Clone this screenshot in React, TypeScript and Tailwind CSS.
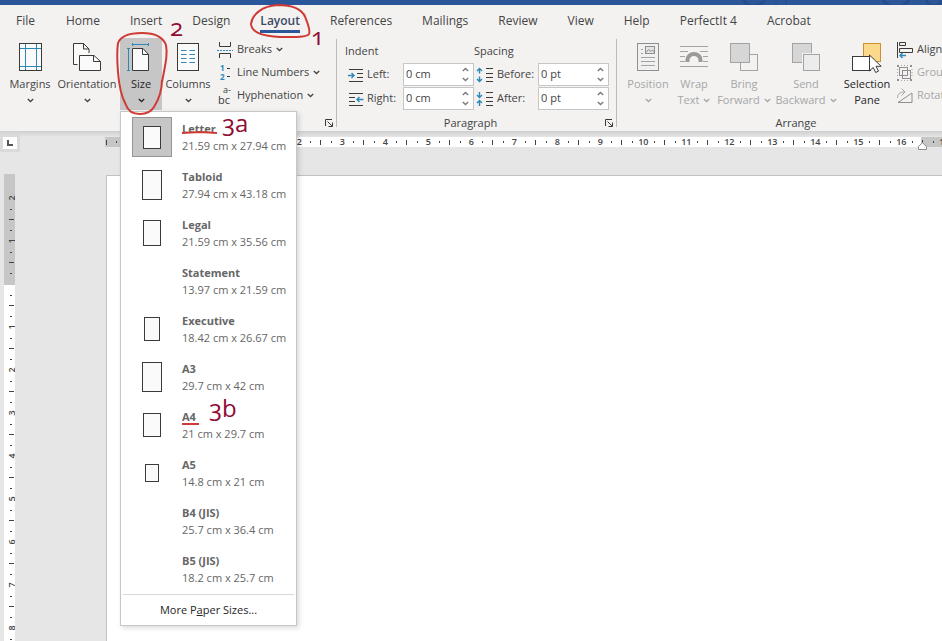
import type { ReactNode } from "react";
import clsx from "clsx";

const TABS = [
  "File",
  "Home",
  "Insert",
  "Design",
  "Layout",
  "References",
  "Mailings",
  "Review",
  "View",
  "Help",
  "PerfectIt 4",
  "Acrobat",
];

type Paper = { name: string; size: string; thumb?: string };

const PAPERS: Paper[] = [
  { name: "Letter", size: "21.59 cm x 27.94 cm", thumb: "w-[18px] h-[23px]" },
  { name: "Tabloid", size: "27.94 cm x 43.18 cm", thumb: "w-5 h-[30px]" },
  { name: "Legal", size: "21.59 cm x 35.56 cm", thumb: "w-[18px] h-[26px]" },
  { name: "Statement", size: "13.97 cm x 21.59 cm" },
  { name: "Executive", size: "18.42 cm x 26.67 cm", thumb: "w-4 h-6" },
  { name: "A3", size: "29.7 cm x 42 cm", thumb: "w-5 h-[30px]" },
  { name: "A4", size: "21 cm x 29.7 cm", thumb: "w-[18px] h-6" },
  { name: "A5", size: "14.8 cm x 21 cm", thumb: "w-[14px] h-[18px]" },
  { name: "B4 (JIS)", size: "25.7 cm x 36.4 cm" },
  { name: "B5 (JIS)", size: "18.2 cm x 25.7 cm" },
];

const INK = "#3b3a39";
const BLUE = "#2b88b8";
const GREY = "#a3a3a3";

function Icon({ w, h, children }: { w: number; h: number; children: ReactNode }) {
  return (
    <svg width={w} height={h} viewBox={`0 0 ${w} ${h}`} fill="none" className="shrink-0 overflow-visible" aria-hidden="true">
      {children}
    </svg>
  );
}

function Chevron() {
  return (
    <svg width="7" height="5" viewBox="0 0 7 5" fill="none" stroke="currentColor" strokeWidth="1.3" aria-hidden="true">
      <path d="M0.8 1l2.7 2.5L6.2 1" />
    </svg>
  );
}

/* ---------- large icons ---------- */

const MarginsIcon = () => (
  <Icon w={24} h={30}>
    <rect x="1.5" y="1.5" width="22" height="27" fill="#fafafa" stroke={INK} />
    <path d="M7.5 2v26M18.5 2v26M2 6.5h21M2 24.5h21" stroke={BLUE} />
  </Icon>
);

const OrientationIcon = () => (
  <Icon w={30} h={30}>
    <path d="M5.5 22.5h-4v-21h10L17 7v4M11.5 1.5V7H17" fill="#fafafa" stroke={INK} />
    <path d="M7.5 13.5H22l6.5 6v9h-21z" fill="#fafafa" stroke={INK} />
    <path d="M21.5 13.5v6h7" stroke={INK} />
  </Icon>
);

const SizeIcon = () => (
  <Icon w={30} h={30}>
    <path d="M6.5 2.5h16M6.5 1v3M22.5 1v3M2.5 6.5v22M1 6.5h3M1 28.5h3" stroke={BLUE} />
    <path d="M6.5 6.5H17l5.5 6v16h-16z" fill="#fafafa" stroke={INK} />
    <path d="M16.5 6.5v6h6" stroke={INK} />
  </Icon>
);

const ColumnsIcon = () => (
  <Icon w={24} h={30}>
    <rect x="1.5" y="1.5" width="21" height="27" fill="#fafafa" stroke={INK} />
    <path
      d="M5 8.5h5.5M5 12.5h5.5M5 16.5h5.5M5 20.5h5.5M13.5 8.5H19M13.5 12.5H19M13.5 16.5H19M13.5 20.5H19"
      stroke={BLUE}
    />
  </Icon>
);

const PositionIcon = () => (
  <Icon w={24} h={30}>
    <rect x="1.5" y="1.5" width="21" height="27" fill="#f0f0f0" stroke="#8f8f8f" />
    <path d="M5 7.5h2M5 11.5h2M5 15.5h14M5 19.5h14M5 23.5h14" stroke={GREY} />
    <rect x="9.5" y="4.5" width="9" height="7" fill="#e4e4e4" stroke="#8f8f8f" />
    <path d="M10 10.5l2.5-3 2.5 2L16.500 8l2 2.500" stroke="#8f8f8f" />
  </Icon>
);

const WrapIcon = () => (
  <Icon w={30} h={30}>
    <path d="M1 4.5h28M1 9.5h8M21 9.5h8M1 14.5h5M24 14.5h5M1 19.5h5M24 19.5h5M1 24.5h28" stroke={GREY} />
    <path d="M8.5 20v-2a6.5 6 0 0 1 13 0v2" stroke="#9a9a9a" strokeWidth="4" />
  </Icon>
);

const ForwardIcon = () => (
  <Icon w={30} h={30}>
    <rect x="11.5" y="12.5" width="17" height="16" fill="#f3f2f1" stroke={GREY} />
    <rect x="1.5" y="1.5" width="19" height="19" fill="#d6d6d6" stroke={GREY} />
  </Icon>
);

const BackwardIcon = () => (
  <Icon w={30} h={30}>
    <rect x="1.5" y="1.5" width="19" height="19" fill="#d6d6d6" stroke={GREY} />
    <rect x="11" y="11" width="19" height="19" fill="#f3f2f1" />
    <rect x="12.5" y="12.5" width="16" height="16" fill="#ececec" stroke={GREY} />
  </Icon>
);

const SelectionIcon = () => (
  <Icon w={32} h={32}>
    <rect x="12.5" y="1.5" width="17" height="18" fill="#fbd88a" stroke="#c9922e" />
    <rect x="1.5" y="14.5" width="18" height="14" fill="#fff" stroke={INK} />
    <path d="M18.5 13v16l3.700-3.500 2.500 5 2.800-1.400-2.500-4.800h5.200z" fill="#fff" stroke={INK} />
  </Icon>
);

/* ---------- small icons ---------- */

const BreaksIcon = () => (
  <Icon w={16} h={16}>
    <path d="M2.5 0v4.5h11V0M2.5 16v-4.500h11V16" stroke={INK} />
    <path d="M0 8.5h16" stroke={BLUE} strokeDasharray="2 1" />
  </Icon>
);

const LineNumbersIcon = () => (
  <Icon w={16} h={16}>
    <text x="3" y="6" fontSize="8" fontWeight="700" fill={BLUE} fontFamily="Open Sans">
      1
    </text>
    <text x="3" y="15" fontSize="8" fontWeight="700" fill={BLUE} fontFamily="Open Sans">
      2
    </text>
    <path d="M10 3.5h3M10 11.5h3" stroke={INK} />
  </Icon>
);

const HyphenationIcon = () => (
  <Icon w={16} h={18}>
    <text x="6" y="6" fontSize="9" fill={INK} fontFamily="Open Sans">
      a-
    </text>
    <text x="1" y="17" fontSize="11" fill={INK} fontFamily="Open Sans">
      bc
    </text>
  </Icon>
);

const IndentLeftIcon = () => (
  <Icon w={16} h={16}>
    <path d="M1 2.5h14M9 6.5h6M9 10.5h6M1 14.5h14" stroke={INK} />
    <path d="M0 8.5h6M3.5 6L6 8.5 3.5 11" stroke={BLUE} strokeWidth="1.4" />
  </Icon>
);

const IndentRightIcon = () => (
  <Icon w={16} h={16}>
    <path d="M1 2.5h14M1 6.5h6M1 10.5h6M1 14.5h14" stroke={INK} />
    <path d="M15.5 8.5H9M11.5 6L9 8.5l2.5 2.5" stroke={BLUE} strokeWidth="1.4" />
  </Icon>
);

const BeforeIcon = () => (
  <Icon w={18} h={16}>
    <path d="M10 1.5h7M10 6.5h7M10 10.5h7M10 14.5h7" stroke={INK} />
    <path d="M3.5 1.5v5M1 4l2.5-2.500L6 4M3.500 9.500v5M1 12l2.500 2.500L6 12" stroke={BLUE} strokeWidth="1.4" />
  </Icon>
);

const AfterIcon = () => (
  <Icon w={18} h={16}>
    <path d="M10 1.5h7M10 6.5h7M10 10.5h7M10 14.5h7" stroke={INK} />
    <path d="M3.5 1v5.5M1 4l2.5 2.500L6 4M3.500 15V9.500M1 12l2.500-2.500L6 12" stroke={BLUE} strokeWidth="1.4" />
  </Icon>
);

const AlignIcon = () => (
  <Icon w={17} h={18}>
    <path d="M1.5 1v16" stroke={INK} />
    <path d="M3.5 1.5h6v3h-6zM3.5 7.5h13v4h-13z" stroke={INK} />
    <path d="M10 14.5H4M6.5 12L4 14.5 6.5 17" stroke={BLUE} strokeWidth="1.4" />
  </Icon>
);

const GroupIcon = () => (
  <Icon w={17} h={18}>
    <rect x="3.5" y="3.5" width="8" height="8" stroke="#8f8f8f" />
    <rect x="6.5" y="6.5" width="8" height="8" stroke="#8f8f8f" />
    <path d="M1 1h2v2H1zM14 1h2v2h-2zM1 15h2v2H1zM14 15h2v2h-2z" fill="#8f8f8f" />
    <path d="M5 1.5h8M5 16.5h8M1.5 5v8M16 5v8" stroke={GREY} strokeDasharray="1 2" />
  </Icon>
);

const RotateIcon = () => (
  <Icon w={17} h={18}>
    <path d="M2 15.5h14V6z" stroke="#8f8f8f" />
    <path d="M1.5 11c0-4 2.5-6 6.5-6M5.500 1.500L9 5 5.500 8.500" stroke={GREY} />
  </Icon>
);

/* ---------- ribbon pieces ---------- */

type BigButtonProps = { icon: ReactNode; label: string; second?: string; arrow?: boolean; className: string };

function BigButton({ icon, label, second, arrow = true, className }: BigButtonProps) {
  return (
    <button type="button" className={clsx("flex h-[72px] shrink-0 flex-col items-center pt-1", className)}>
      <span className="flex h-[34px] justify-center">{icon}</span>
      <span className="whitespace-nowrap leading-4">{label}</span>
      <span className="flex h-4 items-center gap-1 whitespace-nowrap leading-4">
        {second}
        {arrow && <Chevron />}
      </span>
    </button>
  );
}

function SmallButton({ icon, label, arrow, disabled }: { icon: ReactNode; label: string; arrow?: boolean; disabled?: boolean }) {
  return (
    <button
      type="button"
      disabled={disabled}
      className="flex h-[23px] items-center gap-1 whitespace-nowrap disabled:text-[#a6a6a6]"
    >
      {icon}
      <span>{label}</span>
      {arrow && <Chevron />}
    </button>
  );
}

function Spinner({ id, label, value, icon, labelWidth }: { id: string; label: string; value: string; icon: ReactNode; labelWidth: string }) {
  return (
    <div className="flex h-[23px] items-center gap-[3px]">
      {icon}
      <div className="flex items-center">
        <label htmlFor={id} className={clsx("whitespace-nowrap", labelWidth)}>
          {label}
        </label>
        <div className="flex h-[23px] w-[71px] border border-[#c6c6c6] bg-white">
          <input id={id} defaultValue={value} className="w-0 flex-1 bg-transparent pl-[2px] outline-none" />
          <div className="flex w-4 flex-col items-center justify-center gap-[5px] text-[#777]">
            <button type="button" aria-label="Increase" className="rotate-180">
              <Chevron />
            </button>
            <button type="button" aria-label="Decrease">
              <Chevron />
            </button>
          </div>
        </div>
      </div>
    </div>
  );
}

function RibbonGroup({ title, launcher, className, children }: { title: string; launcher?: boolean; className: string; children: ReactNode }) {
  return (
    <section className={clsx("flex shrink-0 flex-col", className)}>
      <div className="flex h-[77px]">{children}</div>
      <div className="flex h-4 items-center">
        <h2 className="flex-1 text-center leading-4">{title}</h2>
        {launcher && (
          <button type="button" aria-label={`${title} settings`} className="mr-[2px]">
            <svg width="10" height="10" viewBox="0 0 10 10" fill="none" stroke={INK} aria-hidden="true">
              <path d="M1.5 8V1.5H8M3.5 3.5l5 5M8.5 4.5v4h-4" />
            </svg>
          </button>
        )}
      </div>
    </section>
  );
}

const Divider = () => <div className="mt-px mb-1 w-px shrink-0 bg-[#bdbbb9]" />;

function PaperMenu() {
  return (
    <div
      role="menu"
      className="absolute top-full left-0 z-10 mt-px w-[177px] border border-[#c6c6c6] bg-white pt-px text-[#666] shadow-[2px_2px_5px_rgba(0,0,0,0.15)]"
    >
      {PAPERS.map((p, i) => (
        <button key={p.name} type="button" role="menuitem" className="flex h-12 w-full items-center gap-[10px] pl-[11px] text-left">
          <span
            className={clsx(
              "flex size-10 shrink-0 items-center justify-center border",
              i === 0 ? "border-[#969696] bg-[#c6c6c6]" : "border-transparent",
            )}
          >
            {p.thumb && <span className={clsx("border border-[#3b3a39] bg-[#fafafa]", p.thumb)} />}
          </span>
          <span className="flex flex-col whitespace-nowrap leading-[17px]">
            <b>{p.name}</b>
            <span>{p.size}</span>
          </span>
        </button>
      ))}
      <div className="mx-[2px] mt-px border-t border-[#d9d9d9]" />
      <button type="button" role="menuitem" className="h-[30px] w-full text-center text-[#262626]">
        More P<u>a</u>per Sizes...
      </button>
    </div>
  );
}

function Ribbon() {
  return (
    <header className="relative z-10 bg-[#f3f2f1] text-[#444]">
      <nav className="flex h-[33px] items-start text-xs">
        {TABS.map((t) => (
          <button
            key={t}
            type="button"
            className={clsx("shrink-0 whitespace-nowrap pt-[6px]", t === "File" ? "px-4" : "px-[15px]")}
          >
            <span
              className={clsx(
                "block leading-[19px]",
                t === "Layout" && "border-b-[3px] border-[#2b579a] font-semibold text-[#3b4a63]",
              )}
            >
              {t}
            </span>
          </button>
        ))}
      </nav>

      <div className="flex h-[93px]">
        <RibbonGroup title="Page Setup" launcher className="w-[336px]">
          <div className="flex pl-1">
            <BigButton icon={<MarginsIcon />} label="Margins" className="w-[52px]" />
            <BigButton icon={<OrientationIcon />} label="Orientation" className="w-[62px]" />
            <div className="relative ml-[2px] h-[72px]">
              <BigButton icon={<SizeIcon />} label="Size" className="w-[42px] bg-[#c6c6c6] text-[#262626]" />
              <PaperMenu />
            </div>
            <BigButton icon={<ColumnsIcon />} label="Columns" className="w-[52px]" />
          </div>
          <div className="flex flex-col pl-[3px]">
            <SmallButton icon={<BreaksIcon />} label="Breaks" arrow />
            <SmallButton icon={<LineNumbersIcon />} label="Line Numbers" arrow />
            <SmallButton icon={<HyphenationIcon />} label="Hyphenation" arrow />
          </div>
        </RibbonGroup>
        <Divider />

        <RibbonGroup title="Paragraph" launcher className="w-[279px]">
          <fieldset className="pt-[5px] pl-2">
            <legend className="contents">
              <span className="block leading-4">Indent</span>
            </legend>
            <div className="mt-1 flex flex-col gap-px pl-[3px]">
              <Spinner id="indent-left" label="Left:" value="0 cm" icon={<IndentLeftIcon />} labelWidth="w-9" />
              <Spinner id="indent-right" label="Right:" value="0 cm" icon={<IndentRightIcon />} labelWidth="w-9" />
            </div>
          </fieldset>
          <fieldset className="pt-[5px]">
            <legend className="contents">
              <span className="block leading-4">Spacing</span>
            </legend>
            <div className="mt-1 flex flex-col gap-px pl-[2px]">
              <Spinner id="space-before" label="Before:" value="0 pt" icon={<BeforeIcon />} labelWidth="w-[41px]" />
              <Spinner id="space-after" label="After:" value="0 pt" icon={<AfterIcon />} labelWidth="w-[41px]" />
            </div>
          </fieldset>
        </RibbonGroup>
        <Divider />

        <RibbonGroup title="Arrange" className="w-[358px]">
          <div className="flex pl-[7px] text-[#a6a6a6]">
            <BigButton icon={<PositionIcon />} label="Position" className="w-12" />
            <BigButton icon={<WrapIcon />} label="Wrap" second="Text" className="w-11" />
            <BigButton icon={<ForwardIcon />} label="Bring" second="Forward" className="w-14" />
            <BigButton icon={<BackwardIcon />} label="Send" second="Backward" className="w-[68px]" />
            <BigButton icon={<SelectionIcon />} label="Selection" second="Pane" arrow={false} className="w-[54px] text-[#262626]" />
          </div>
          <div className="flex flex-col pl-[2px]">
            <SmallButton icon={<AlignIcon />} label="Align" arrow />
            <SmallButton icon={<GroupIcon />} label="Group" arrow disabled />
            <SmallButton icon={<RotateIcon />} label="Rotate" arrow disabled />
          </div>
        </RibbonGroup>
      </div>
    </header>
  );
}

/* ---------- rulers ---------- */

// one centimetre: number, dot, half mark, dot
function HCell({ n }: { n: string }) {
  return (
    <div className="grid w-[43px] shrink-0 grid-cols-4 items-center justify-items-center">
      <span className="whitespace-nowrap">{n}</span>
      <span className="h-[2px] w-px bg-[#444]" />
      <span className="h-[5px] w-px bg-[#444]" />
      <span className="h-[2px] w-px bg-[#444]" />
    </div>
  );
}

function HorizontalRuler() {
  return (
    <div className="relative grid h-[10px] flex-1 text-[9px] font-semibold leading-[10px] text-[#444]">
      <div className="col-start-1 row-start-1 flex">
        <div className="w-[108px] bg-[#c6c6c6]" />
        <div className="w-[708px] bg-white" />
        <div className="flex-1 bg-[#c6c6c6]" />
      </div>
      <div className="col-start-1 row-start-1 flex w-full overflow-hidden">
        <div className="-ml-1 grid w-[21px] shrink-0 grid-cols-2 items-center justify-items-center">
          <span className="h-[5px] w-px bg-[#444]" />
          <span className="h-[2px] w-px bg-[#444]" />
        </div>
        {["2", "1", ""].map((n, i) => (
          <HCell key={i} n={n} />
        ))}
        {Array.from({ length: 17 }, (_, i) => (
          <HCell key={i} n={String(i + 1)} />
        ))}
      </div>
      <svg width="9" height="8" viewBox="0 0 9 8" className="absolute top-[5px] left-[813px]" aria-hidden="true">
        <path d="M0.5 7.5v-3L4.5 0.7l4 3.8v3z" fill="#fff" stroke="#8a8a8a" />
      </svg>
    </div>
  );
}

function VCell({ n }: { n: string }) {
  return (
    <div className="grid h-[43px] shrink-0 grid-rows-4 items-center justify-items-center">
      <span className="-rotate-90 leading-[10px]">{n}</span>
      <span className="h-px w-[2px] bg-[#444]" />
      <span className="h-px w-[5px] bg-[#444]" />
      <span className="h-px w-[2px] bg-[#444]" />
    </div>
  );
}

function VerticalRuler() {
  return (
    <div className="ml-1 grid w-[11px] shrink-0 overflow-hidden text-[9px] font-semibold text-[#444]">
      <div className="col-start-1 row-start-1 flex flex-col">
        <div className="h-[111px] bg-[#c6c6c6]" />
        <div className="flex-1 bg-white" />
      </div>
      <div className="col-start-1 row-start-1 flex h-0 flex-col pt-[19px] pl-[2px]">
        {["2", "1", ""].map((n, i) => (
          <VCell key={i} n={n} />
        ))}
        {Array.from({ length: 10 }, (_, i) => (
          <VCell key={i} n={String(i + 1)} />
        ))}
      </div>
    </div>
  );
}

/* ---------- hand-drawn notes over the window ---------- */

function Notes() {
  return (
    <div className="pointer-events-none absolute inset-0 z-20 text-2xl font-medium leading-6 text-[#8f0a32] oldstyle-nums">
      <svg width="320" height="430" viewBox="0 0 320 430" fill="none" stroke="#cf3a34" strokeWidth="2" aria-hidden="true">
        <path d="M305 17C302 9 292 5 277 5C263 6 252 14 251 24C252 34 265 36 280 37C292 37 306 38 309 34C311 30 307 22 304 14" />
        <path d="M162 80C162 90 159 99 154 107C151 112 146 114 140 114C133 114 128 111 126 105C121 96 119 86 118 72C117 60 117 50 118 43C121 35 131 33 142 33C154 33 163 37 166 45C168 55 165 66 162 82" />
        <path d="M182 133l18-1 17 1M182 424h17" />
      </svg>
      <span className="absolute top-[24px] left-[311px]">1</span>
      <span className="absolute top-[15px] left-[170px]">2</span>
      <span className="absolute top-[111px] left-[222px]">3a</span>
      <span className="absolute top-[396px] left-[209px]">3b</span>
    </div>
  );
}

export default function App() {
  return (
    <div className="relative flex h-screen flex-col overflow-hidden bg-[#e6e6e6] font-['Open_Sans','Noto_Sans',sans-serif] text-[11px]">
      <div className="flex h-[5px] shrink-0 justify-end overflow-hidden bg-[#2b579a]">
        <svg width="260" height="5" viewBox="0 0 260 5" fill="none" stroke="#254d8a" strokeWidth="3" aria-hidden="true">
          <circle cx="72" cy="-6" r="12" />
          <circle cx="214" cy="-8" r="15" />
          <circle cx="252" cy="-2" r="8" />
          <path d="M94 0v5M104 0v5" strokeWidth="1" />
        </svg>
      </div>
      <Ribbon />

      <main className="flex min-h-0 flex-1 flex-col">
        <div className="flex h-[43px] shrink-0 items-start bg-linear-to-b from-[#cfcfcf] to-[#e6e6e6] to-[6px]">
          <div className="mt-[3px] flex w-[105px] shrink-0">
            <button
              type="button"
              aria-label="Tab stop"
              className="flex h-[18px] w-5 items-center justify-center border-[3px] border-[#dadada] bg-white"
            >
              <svg width="6" height="6" viewBox="0 0 6 6" fill="none" stroke="#555" strokeWidth="2" aria-hidden="true">
                <path d="M1 0v5h5" />
              </svg>
            </button>
          </div>
          <div className="flex min-w-0 flex-1 pt-[6px]">
            <HorizontalRuler />
          </div>
        </div>
        <div className="flex min-h-0 flex-1">
          <VerticalRuler />
          <article aria-label="Document page" className="mt-px ml-[91px] flex-1 border-t border-l border-[#c2c2c2] bg-white" />
        </div>
      </main>
      <Notes />
    </div>
  );
}
